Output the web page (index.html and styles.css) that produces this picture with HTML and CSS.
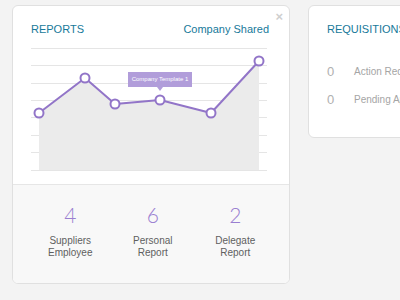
FILE: index.html
```html
<!DOCTYPE html>
<html>
<head>
<meta charset="utf-8">
<link rel="stylesheet" href="styles.css">
</head>
<body>
<div class="board">
  <section class="card reports">
    <div class="top">
      <span class="close">×</span>
      <header class="head">
        <h2 class="title">REPORTS</h2>
        <span class="sub">Company Shared</span>
      </header>
      <div class="chart">
        <svg class="plot" width="276" height="140" viewBox="0 0 276 140">
          <g stroke="#e5e5e5" stroke-width="1">
            <line x1="18" y1="4.5" x2="254" y2="4.5"/>
            <line x1="18" y1="21.5" x2="254" y2="21.5"/>
            <line x1="18" y1="39.5" x2="254" y2="39.5"/>
            <line x1="18" y1="56.5" x2="254" y2="56.5"/>
            <line x1="18" y1="73.5" x2="254" y2="73.5"/>
            <line x1="18" y1="91.5" x2="254" y2="91.5"/>
            <line x1="18" y1="108.5" x2="254" y2="108.5"/>
            <line x1="18" y1="126.5" x2="254" y2="126.5"/>
          </g>
          <polygon points="26,69 72,34 102,60 147,56 198,69 246,17 246,126 26,126" fill="#ebebeb"/>
          <polyline points="26,69 72,34 102,60 147,56 198,69 246,17" fill="none" stroke="#9275c8" stroke-width="2" stroke-linejoin="round"/>
          <g fill="#fff" stroke="#9275c8" stroke-width="2">
            <circle cx="26" cy="69" r="4.5"/>
            <circle cx="72" cy="34" r="4.5"/>
            <circle cx="102" cy="60" r="4.5"/>
            <circle cx="147" cy="56" r="4.5"/>
            <circle cx="198" cy="69" r="4.5"/>
            <circle cx="246" cy="17" r="4.5"/>
          </g>
        </svg>
        <div class="tip">Company Template 1</div>
      </div>
    </div>
    <div class="stats">
      <div class="stat"><span class="num">4</span><span class="label">Suppliers<br>Employee</span></div>
      <div class="stat"><span class="num">6</span><span class="label">Personal<br>Report</span></div>
      <div class="stat"><span class="num">2</span><span class="label">Delegate<br>Report</span></div>
    </div>
  </section>
  <section class="card reqs">
    <h2 class="title">REQUISITIONS</h2>
    <ul class="rows">
      <li class="row"><span class="count">0</span><span class="what">Action Required</span></li>
      <li class="row"><span class="count">0</span><span class="what">Pending Approval</span></li>
    </ul>
  </section>
</div>
</body>
</html>
```
FILE: styles.css
```css
* { box-sizing: border-box; }
html, body { margin: 0; padding: 0; overflow: hidden; }
body {
  background: #f3f3f3;
  font-family: "Liberation Sans", Arial, sans-serif;
  width: 400px;
  height: 300px;
}
.board {
  display: flex;
  gap: 18px;
  padding: 5px 0 0 12px;
  width: 400px;
  overflow: hidden;
}
.card {
  background: #fff;
  border: 1px solid #e0e0e0;
  border-radius: 6px;
  position: relative;
  overflow: hidden;
}
.reports {
  width: 278px;
  height: 279px;
  flex: none;
  display: flex;
  flex-direction: column;
}
.top {
  height: 179px;
  position: relative;
  border-bottom: 1px solid #e6e6e6;
}
.close {
  position: absolute;
  top: 4px;
  right: 6px;
  color: #cfcfcf;
  font-size: 13px;
  font-weight: bold;
  line-height: 13px;
}
.head {
  display: flex;
  justify-content: space-between;
  align-items: baseline;
  padding: 17px 20px 0 18px;
  height: 38px;
}
.title {
  margin: 0;
  font-size: 11px;
  font-weight: normal;
  color: #17799a;
  white-space: nowrap;
}
.sub {
  font-size: 11px;
  color: #17799a;
}
.chart {
  position: relative;
  height: 140px;
}
.plot { display: block; }
.tip {
  position: absolute;
  left: 115px;
  top: 28px;
  width: 64px;
  height: 15px;
  background: #b19dda;
  color: #fff;
  font-size: 6px;
  line-height: 15px;
  text-align: center;
  white-space: nowrap;
}
.tip::after {
  content: "";
  position: absolute;
  left: 29px;
  bottom: -4px;
  border-left: 3px solid transparent;
  border-right: 3px solid transparent;
  border-top: 4px solid #b19dda;
}
.stats {
  flex: 1;
  background: #f8f8f8;
  display: grid;
  grid-template-columns: repeat(3, 82.5px);
  padding: 18px 0 0 16px;
  align-content: start;
}
.stat {
  display: flex;
  flex-direction: column;
  align-items: center;
  text-align: center;
}
.num {
  font-family: Lato, "Liberation Sans", sans-serif;
  font-weight: 300;
  font-size: 21px;
  line-height: 24px;
  color: #9a7fd1;
}
.label {
  margin-top: 8px;
  font-size: 10px;
  line-height: 12px;
  color: #5f5f5f;
}
.reqs {
  width: 140px;
  height: 133px;
  flex: none;
  padding: 17px 0 0 18px;
}
.rows {
  list-style: none;
  margin: 28px 0 0;
  padding: 0;
  display: flex;
  flex-direction: column;
  gap: 12px;
}
.row {
  display: flex;
  align-items: center;
  height: 16px;
  white-space: nowrap;
}
.count {
  flex: none;
  width: 27px;
  font-family: "Liberation Sans", sans-serif;
  font-size: 13px;
  color: #b0b0b0;
}
.what {
  flex: none;
  font-size: 10px;
  color: #a5a5a5;
}
```
